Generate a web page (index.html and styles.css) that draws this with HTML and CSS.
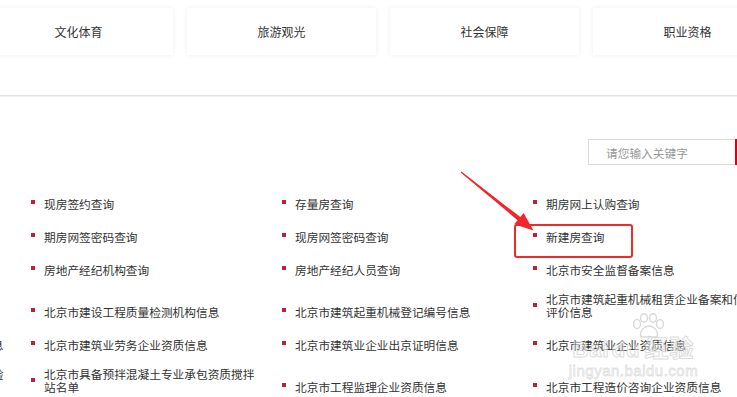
FILE: index.html
```html
<!DOCTYPE html>
<html lang="zh-CN">
<head>
<meta charset="utf-8">
<title>查询服务</title>
<link rel="stylesheet" href="styles.css">
</head>
<body>
<div class="page">
  <div class="cards">
    <div class="card">文化体育</div>
    <div class="card">旅游观光</div>
    <div class="card">社会保障</div>
    <div class="card">职业资格</div>
  </div>
  <div class="divider"></div>
  <div class="search">
    <div class="search-box">请您输入关键字</div>
    <div class="search-btn"></div>
  </div>
  <ul class="links">
    <li class="item empty"></li>
    <li class="item"><i class="dot"></i><span class="txt">现房签约查询</span></li>
    <li class="item"><i class="dot"></i><span class="txt">存量房查询</span></li>
    <li class="item"><i class="dot"></i><span class="txt">期房网上认购查询</span></li>

    <li class="item empty"></li>
    <li class="item"><i class="dot"></i><span class="txt">期房网签密码查询</span></li>
    <li class="item"><i class="dot"></i><span class="txt">现房网签密码查询</span></li>
    <li class="item"><i class="dot"></i><span class="txt">新建房查询</span></li>

    <li class="item empty"></li>
    <li class="item"><i class="dot"></i><span class="txt">房地产经纪机构查询</span></li>
    <li class="item"><i class="dot"></i><span class="txt">房地产经纪人员查询</span></li>
    <li class="item"><i class="dot"></i><span class="txt">北京市安全监督备案信息</span></li>

    <li class="item empty"></li>
    <li class="item"><i class="dot"></i><span class="txt">北京市建设工程质量检测机构信息</span></li>
    <li class="item"><i class="dot"></i><span class="txt">北京市建筑起重机械登记编号信息</span></li>
    <li class="item"><i class="dot"></i><span class="txt">北京市建筑起重机械租赁企业备案和信用评价信息</span></li>

    <li class="item"><i class="dot"></i><span class="txt">北京市建筑施工企业安全生产许可证信息</span></li>
    <li class="item"><i class="dot"></i><span class="txt">北京市建筑业劳务企业资质信息</span></li>
    <li class="item"><i class="dot"></i><span class="txt">北京市建筑业企业出京证明信息</span></li>
    <li class="item"><i class="dot"></i><span class="txt">北京市建筑业企业资质信息</span></li>

    <li class="item"><i class="dot"></i><span class="txt">北京市预拌混凝土搅拌站质量检测与试验信息</span></li>
    <li class="item"><i class="dot"></i><span class="txt">北京市具备预拌混凝土专业承包资质搅拌站名单</span></li>
    <li class="item"><i class="dot"></i><span class="txt">北京市工程监理企业资质信息</span></li>
    <li class="item"><i class="dot"></i><span class="txt">北京市工程造价咨询企业资质信息</span></li>
  </ul>

  <div class="highlight"></div>
  <svg class="arrow" width="737" height="397" viewBox="0 0 737 397" aria-hidden="true">
    <polygon fill="#f0262b" points="460.6,172.5 517.6,220.2 514.2,224.3 533.5,230.5 523.6,213.0 520.3,217.1 461.4,171.5"/>
  </svg>

  <div class="watermark" aria-hidden="true">
    <svg class="paw" width="40" height="26" viewBox="0 0 40 26">
      <g fill="none" stroke="#dadada" stroke-width="1.4">
        <ellipse cx="8" cy="11" rx="3.5" ry="4.5"/>
        <ellipse cx="15" cy="5" rx="3.5" ry="4.2"/>
        <ellipse cx="24" cy="5" rx="3.5" ry="4.2"/>
        <ellipse cx="31" cy="11" rx="3.5" ry="4.5"/>
        <path d="M12 24 C10 17 16 13 20 13 C24 13 30 17 28 24 Z"/>
      </g>
    </svg>
    <div class="wm-logo"><span>Bai</span><span class="wm-du">du</span><span class="wm-cn">经验</span></div>
    <div class="wm-url">jingyan.baidu.com</div>
  </div>
</div>
</body>
</html>
```
FILE: styles.css
```css
html, body {
  margin: 0;
  padding: 0;
  overflow: hidden;
  background: #ffffff;
}

body {
  font-family: "Noto Sans CJK SC", "Noto Sans", "Liberation Sans", sans-serif;
  font-size: 11.7px;
  color: #333333;
}

.page {
  position: relative;
  width: 737px;
  height: 397px;
}

.cards {
  display: flex;
  gap: 14px;
  margin-left: -16px;
  padding-top: 8px;
}

.card {
  flex: 0 0 189px;
  height: 47px;
  display: flex;
  align-items: center;
  justify-content: center;
  background: #ffffff;
  box-shadow: 0 0 5px rgba(0, 0, 0, 0.07);
  font-size: 12px;
  color: #333333;
}

.divider {
  margin-top: 40px;
  height: 1px;
  background: #e2e2e2;
  border-bottom: 1px solid #f0f0f0;
}

.search {
  display: flex;
  margin-top: 42px;
  padding-left: 588px;
  height: 26px;
}

.search-box {
  flex: 0 0 147px;
  box-sizing: border-box;
  height: 26px;
  border: 1px solid #dcdcdc;
  border-right: none;
  padding-left: 17px;
  display: flex;
  align-items: center;
  color: #999999;
  font-size: 11.7px;
}

.search-btn {
  flex: 0 0 60px;
  height: 26px;
  background: #d9000f;
}

.links {
  list-style: none;
  margin: 28px 0 0 -220px;
  padding: 0;
  display: grid;
  grid-template-columns: repeat(4, 251px);
  row-gap: 13px;
  align-items: end;
}

.item {
  box-sizing: border-box;
  display: flex;
  align-items: flex-end;
  gap: 9px;
  min-height: 20px;
  padding-bottom: 3px;
  line-height: 13px;
}

.dot {
  flex: 0 0 4px;
  align-self: center;
  width: 4px;
  height: 4px;
  background: #b82338;
}

.txt {
  width: 218px;
  color: #333333;
}

.highlight {
  position: absolute;
  left: 514px;
  top: 224px;
  width: 119px;
  height: 34px;
  box-sizing: border-box;
  border: 2px solid #ee2b2b;
  border-radius: 3px;
}

.arrow {
  position: absolute;
  left: 0;
  top: 0;
  pointer-events: none;
}

.watermark {
  position: absolute;
  left: 566px;
  top: 313px;
  width: 135px;
  display: flex;
  flex-direction: column;
  align-items: center;
  pointer-events: none;
}

.paw {
  margin-left: 30px;
}

.wm-logo {
  margin-top: -3px;
  font-family: "Liberation Sans", "Noto Sans CJK SC", sans-serif;
  font-size: 22px;
  font-weight: bold;
  line-height: 22px;
  color: rgba(255, 255, 255, 0.35);
  -webkit-text-stroke: 1px rgba(205, 205, 205, 0.7);
  letter-spacing: 1px;
  white-space: nowrap;
}

.wm-du {
  margin-left: 2px;
}

.wm-cn {
  margin-left: 4px;
  font-family: "Noto Sans CJK SC", sans-serif;
  font-size: 24px;
}

.wm-url {
  margin-top: 2px;
  font-family: "Liberation Sans", sans-serif;
  font-size: 15px;
  line-height: 15px;
  color: rgba(255, 255, 255, 0.35);
  -webkit-text-stroke: 0.8px rgba(205, 205, 205, 0.65);
  letter-spacing: 0.5px;
  white-space: nowrap;
}
```
